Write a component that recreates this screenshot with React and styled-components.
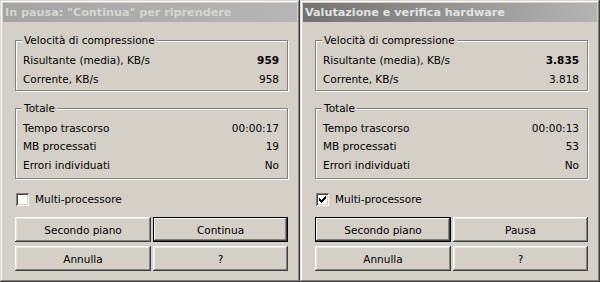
import React from 'react'
import styled, { createGlobalStyle } from 'styled-components'

const dialogs = [
  {
    title: 'In pausa: "Continua" per riprendere',
    titleFrom: '#a4a4a4',
    titleTo: '#b6b6b6',
    titleColor: '#d8d5d0',
    speed: { avg: '959', cur: '958' },
    total: { time: '00:00:17', mb: '19', errors: 'No' },
    multi: false,
    action: 'Continua',
    defaultBtn: 'action',
  },
  {
    title: 'Valutazione e verifica hardware',
    titleFrom: '#727272',
    titleTo: '#b4b4b4',
    titleColor: '#e2e2e2',
    speed: { avg: '3.835', cur: '3.818' },
    total: { time: '00:00:13', mb: '53', errors: 'No' },
    multi: true,
    action: 'Pausa',
    defaultBtn: 'background',
  },
]

// classic 7x7 check mark, drawn pixel by pixel
const checkPixels = [
  '......#',
  '.....##',
  '#...###',
  '##.###.',
  '#####..',
  '.###...',
  '..#....',
]

const CheckMark = () => (
  <svg width="7" height="7" viewBox="0 0 7 7" shapeRendering="crispEdges">
    {checkPixels.map((line, y) =>
      line.split('').map((c, x) =>
        c === '#' ? <rect key={`${x}-${y}`} x={x} y={y} width="1" height="1" fill="#000" /> : null
      )
    )}
  </svg>
)

const Dialog = ({ d }) => (
  <Window>
    <TitleBar from={d.titleFrom} to={d.titleTo} color={d.titleColor}>
      {d.title}
    </TitleBar>
    <Body>
      <GroupBox height={51} top={18}>
        <Legend>Velocità di compressione</Legend>
        <Rows>
          <Row h={19}>
            <span>Risultante (media), KB/s</span>
            <Strong>{d.speed.avg}</Strong>
          </Row>
          <Row h={19}>
            <span>Corrente, KB/s</span>
            <span>{d.speed.cur}</span>
          </Row>
        </Rows>
      </GroupBox>

      <GroupBox height={71} top={17}>
        <Legend>Totale</Legend>
        <Rows>
          <Row h={19}>
            <span>Tempo trascorso</span>
            <span>{d.total.time}</span>
          </Row>
          <Row h={18}>
            <span>MB processati</span>
            <span>{d.total.mb}</span>
          </Row>
          <Row h={19}>
            <span>Errori individuati</span>
            <span>{d.total.errors}</span>
          </Row>
        </Rows>
      </GroupBox>

      <CheckRow>
        <CheckBox>{d.multi && <CheckMark />}</CheckBox>
        Multi-processore
      </CheckRow>

      <Buttons>
        <Button isDefault={d.defaultBtn === 'background'}>Secondo piano</Button>
        <Button isDefault={d.defaultBtn === 'action'}>{d.action}</Button>
        <Button>Annulla</Button>
        <Button>?</Button>
      </Buttons>
    </Body>
  </Window>
)

export default function App() {
  return (
    <>
      <GlobalStyle />
      <Page>
        {dialogs.map((d, i) => (
          <Dialog key={i} d={d} />
        ))}
      </Page>
    </>
  )
}

const GlobalStyle = createGlobalStyle`
  html, body {
    margin: 0;
    padding: 0;
    background: #d4d0c8;
  }
  body {
    font-family: "DejaVu Sans", Verdana, sans-serif;
    font-size: 10.5px;
    color: #000;
  }
`

const Page = styled.div`
  display: flex;
  width: 600px;
  height: 282px;
`

const Window = styled.div`
  box-sizing: border-box;
  width: 300px;
  height: 282px;
  padding: 3px;
  background: #d4d0c8;
  box-shadow: inset -1px -1px 0 #404040, inset 1px 1px 0 #dcd8d0,
    inset -2px -2px 0 #808080, inset 2px 2px 0 #ffffff;
  display: flex;
  flex-direction: column;
`

const TitleBar = styled.div`
  height: 19px;
  padding-left: 2px;
  display: flex;
  align-items: center;
  background: linear-gradient(to right, ${(p) => p.from}, ${(p) => p.to});
  color: ${(p) => p.color};
  font-family: "DejaVu Sans", Verdana, sans-serif;
  font-weight: bold;
  font-size: 11.2px;
  white-space: nowrap;
  overflow: hidden;
`

const Body = styled.div`
  padding: 0 9px 0 12px;
  display: flex;
  flex-direction: column;
`

const GroupBox = styled.div`
  position: relative;
  box-sizing: border-box;
  height: ${(p) => p.height}px;
  margin-top: ${(p) => p.top}px;
  border: 1px solid #808080;
  box-shadow: inset 1px 1px 0 #ffffff, 1px 1px 0 #ffffff;
`

const Legend = styled.span`
  position: absolute;
  top: -7px;
  left: 6px;
  padding: 0 2px;
  line-height: 13px;
  background: #d4d0c8;
`

const Rows = styled.div`
  padding: 9px 8px 0 7px;
  display: flex;
  flex-direction: column;
`

const Row = styled.div`
  height: ${(p) => p.h}px;
  display: flex;
  align-items: center;
  justify-content: space-between;
  white-space: nowrap;
`

const Strong = styled.span`
  font-weight: bold;
`

const CheckRow = styled.div`
  margin-top: 13px;
  height: 14px;
  display: flex;
  align-items: center;
  gap: 6px;
  padding-left: 1px;
`

const CheckBox = styled.span`
  box-sizing: border-box;
  width: 13px;
  height: 13px;
  background: #ffffff;
  display: flex;
  align-items: center;
  justify-content: center;
  box-shadow: inset 1px 1px 0 #808080, inset -1px -1px 0 #ffffff,
    inset 2px 2px 0 #404040, inset -2px -2px 0 #d4d0c8;
`

const Buttons = styled.div`
  margin-top: 11px;
  display: grid;
  grid-template-columns: 136px 135px;
  column-gap: 2px;
  row-gap: 4px;
`

const Button = styled.div`
  box-sizing: border-box;
  height: 25px;
  display: flex;
  align-items: center;
  justify-content: center;
  background: #d4d0c8;
  border: ${(p) => (p.isDefault ? '1px solid #000000' : 'none')};
  box-shadow: ${(p) =>
    p.isDefault
      ? 'inset -1px -1px 0 #404040, inset 1px 1px 0 #ffffff, inset -2px -2px 0 #808080'
      : 'inset -1px -1px 0 #404040, inset 1px 1px 0 #ffffff, inset -2px -2px 0 #808080, inset 2px 2px 0 #e8e6e0'};
`
